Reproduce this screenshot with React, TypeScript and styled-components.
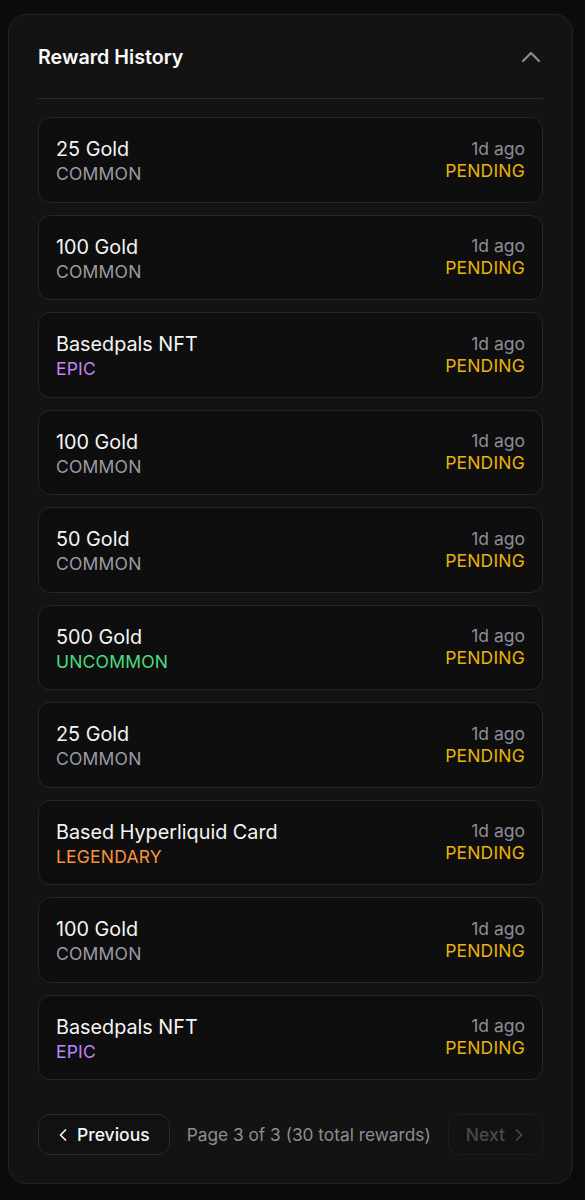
import styled, { createGlobalStyle } from 'styled-components'
import { ChevronUp, ChevronLeft, ChevronRight } from 'lucide-react'

type Rarity = 'common' | 'uncommon' | 'epic' | 'legendary'

const rewards: { name: string; rarity: Rarity }[] = [
  { name: '25 Gold', rarity: 'common' },
  { name: '100 Gold', rarity: 'common' },
  { name: 'Basedpals NFT', rarity: 'epic' },
  { name: '100 Gold', rarity: 'common' },
  { name: '50 Gold', rarity: 'common' },
  { name: '500 Gold', rarity: 'uncommon' },
  { name: '25 Gold', rarity: 'common' },
  { name: 'Based Hyperliquid Card', rarity: 'legendary' },
  { name: '100 Gold', rarity: 'common' },
  { name: 'Basedpals NFT', rarity: 'epic' },
]

const rarityColors: Record<Rarity, string> = {
  common: '#9a9ca6',
  uncommon: '#4ade80',
  epic: '#c084fc',
  legendary: '#fb923c',
}

const GlobalStyle = createGlobalStyle`
  body {
    margin: 0;
    background: #0b0b0b;
    font-family: Inter, "Noto Sans", sans-serif;
    -webkit-font-smoothing: antialiased;
  }
`

function App() {
  return (
    <>
      <GlobalStyle />
      <Card>
        <Header>
          <Title>Reward History</Title>
          <Toggle>
            <ChevronUp size={32} strokeWidth={1.6} />
          </Toggle>
        </Header>

        <List>
          {rewards.map((r, i) => (
            <Item key={i}>
              <Left>
                <Name>{r.name}</Name>
                <RarityLabel $rarity={r.rarity}>{r.rarity.toUpperCase()}</RarityLabel>
              </Left>
              <Right>
                <Time>1d ago</Time>
                <Status>PENDING</Status>
              </Right>
            </Item>
          ))}
        </List>

        <Pagination>
          <PageButton $side="prev">
            <ChevronLeft size={20} strokeWidth={2} />
            Previous
          </PageButton>
          <PageInfo>Page 3 of 3 (30 total rewards)</PageInfo>
          <PageButton $side="next" disabled>
            Next
            <ChevronRight size={20} strokeWidth={2} />
          </PageButton>
        </Pagination>
      </Card>
    </>
  )
}

const Card = styled.div`
  margin: 14px 12px 16px 8px;
  background: #131313;
  border: 1px solid #232323;
  border-radius: 18px;
  padding: 29px 29px 28px;
`

const Header = styled.div`
  display: flex;
  align-items: center;
  justify-content: space-between;
  height: 26px;
  padding-bottom: 28px;
  border-bottom: 1px solid #2a2a2a;
`

const Title = styled.h2`
  margin: 0;
  color: #fafafa;
  font-size: 19.7px;
  font-weight: 600;
  line-height: 26px;
`

const Toggle = styled.button`
  display: flex;
  align-items: center;
  justify-content: center;
  background: none;
  border: none;
  padding: 0;
  margin-right: -4px;
  color: #8b8d96;
  cursor: pointer;
`

const List = styled.div`
  display: flex;
  flex-direction: column;
  gap: 12px;
  margin-top: 18px;
`

const Item = styled.div`
  display: flex;
  align-items: center;
  justify-content: space-between;
  height: 85.5px;
  box-sizing: border-box;
  padding: 0 17px;
  background: #0e0e0e;
  border: 1px solid #262626;
  border-radius: 12px;
`

const Left = styled.div`
  display: flex;
  flex-direction: column;
  padding-top: 1px;
`

const Name = styled.span`
  color: #f5f5f5;
  font-size: 19.8px;
  line-height: 28px;
`

const RarityLabel = styled.span<{ $rarity: Rarity }>`
  color: ${p => rarityColors[p.$rarity]};
  font-size: 17.5px;
  line-height: 22px;
  letter-spacing: 0.2px;
`

const Right = styled.div`
  display: flex;
  flex-direction: column;
  align-items: flex-end;
`

const Time = styled.span`
  color: #8b8d96;
  font-size: 17.5px;
  line-height: 22px;
`

const Status = styled.span`
  color: #eab308;
  font-size: 17.5px;
  line-height: 22px;
  letter-spacing: 0.2px;
`

const Pagination = styled.div`
  display: flex;
  align-items: center;
  justify-content: space-between;
  margin-top: 34px;
`

const PageButton = styled.button<{ $side: 'prev' | 'next' }>`
  display: flex;
  align-items: center;
  gap: 4px;
  height: 41px;
  padding: ${p => (p.$side === 'prev' ? '0 19px 0 14px' : '0 13px 0 17px')};
  background: #111111;
  border: 1px solid #2a2a2a;
  border-radius: 12px;
  color: #f5f5f5;
  font-family: inherit;
  font-size: 17.5px;
  font-weight: 500;
  cursor: pointer;

  &:disabled {
    color: #4a4a4f;
    border-color: #1d1d1d;
    background: #121212;
    cursor: not-allowed;
  }
`

const PageInfo = styled.span`
  color: #8b8d96;
  font-size: 17.3px;
`

export default App
